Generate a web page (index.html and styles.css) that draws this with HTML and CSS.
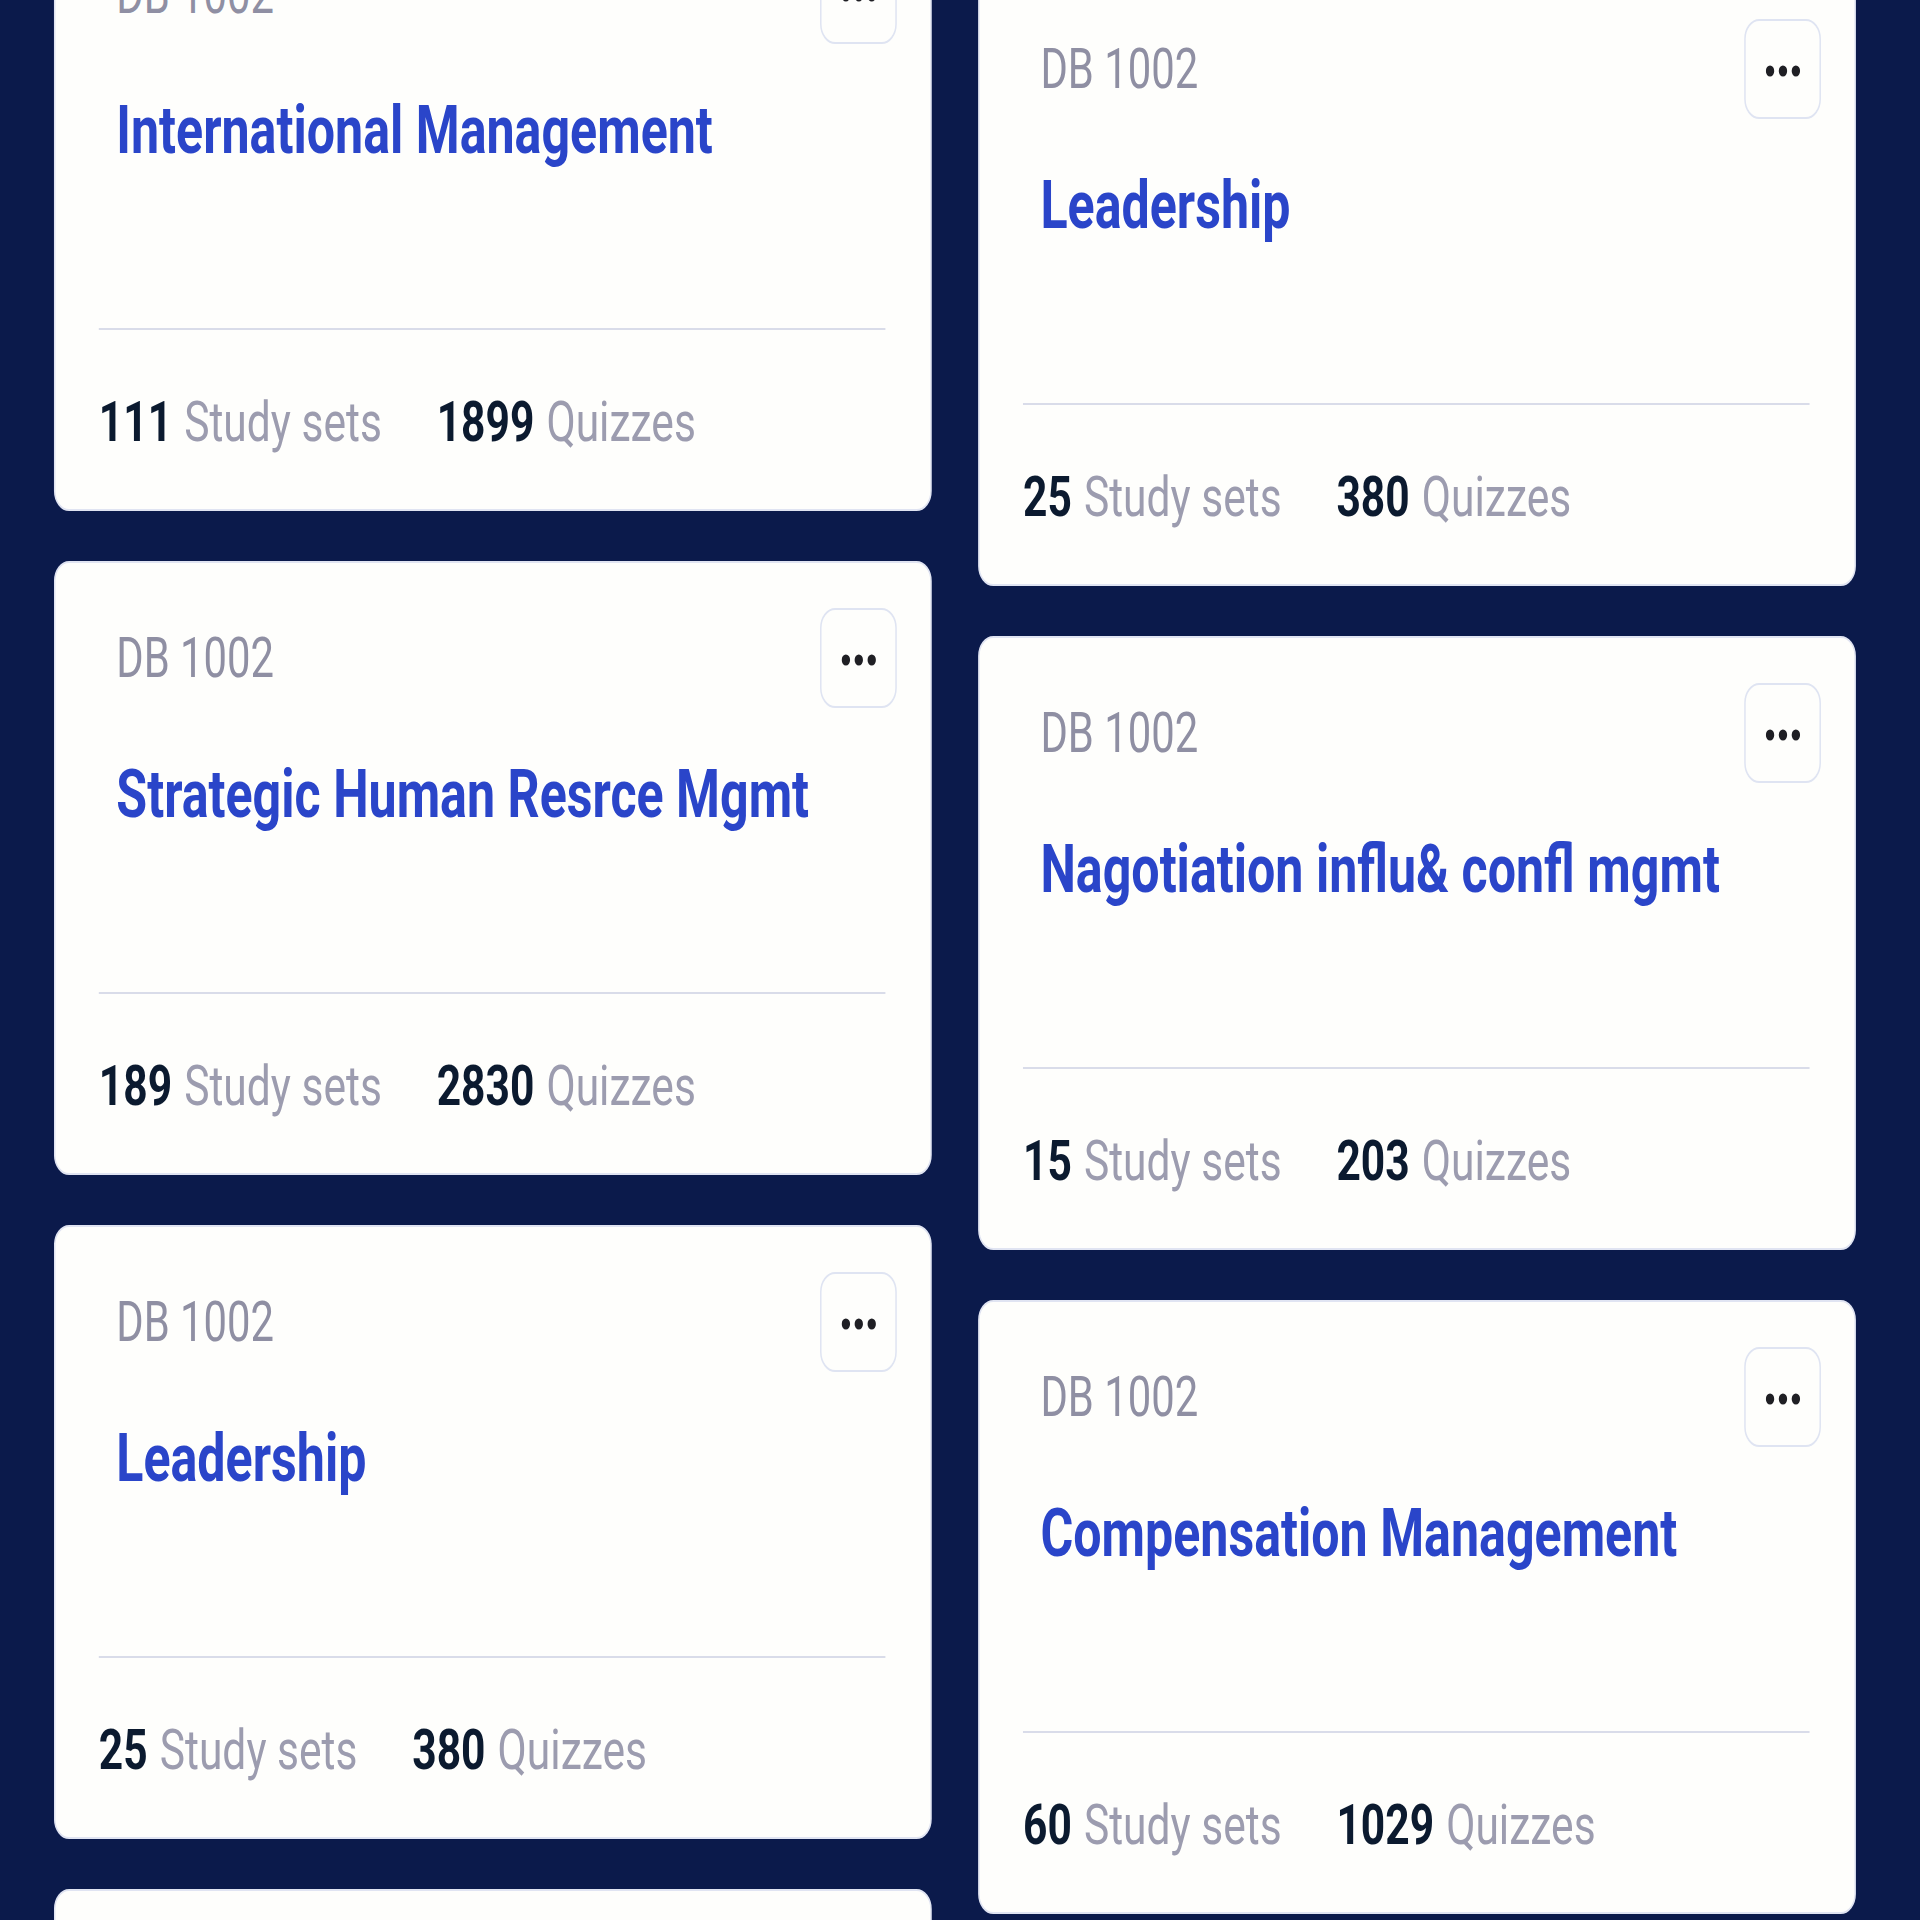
FILE: index.html
```html
<!DOCTYPE html>
<html>
  <head>
    <meta charset="UTF-8" />
    <title>Courses</title>
    <link rel="stylesheet" href="styles.css">
  </head>
  <body>
    <div class="board">
      <div class="col col-left">
        <div class="card">
          <div class="head">
            <span class="code">DB 1002</span>
            <button class="more"><svg width="46" height="14" viewBox="0 0 46 14"><circle cx="6" cy="7" r="5.5"/><circle cx="23" cy="7" r="5.5"/><circle cx="40" cy="7" r="5.5"/></svg></button>
          </div>
          <div class="title">International Management</div>
          <div class="rule"></div>
          <div class="stats"><span><b>111</b> Study sets</span><span><b>1899</b> Quizzes</span></div>
        </div>
        <div class="card">
          <div class="head">
            <span class="code">DB 1002</span>
            <button class="more"><svg width="46" height="14" viewBox="0 0 46 14"><circle cx="6" cy="7" r="5.5"/><circle cx="23" cy="7" r="5.5"/><circle cx="40" cy="7" r="5.5"/></svg></button>
          </div>
          <div class="title">Strategic Human Resrce Mgmt</div>
          <div class="rule"></div>
          <div class="stats"><span><b>189</b> Study sets</span><span><b>2830</b> Quizzes</span></div>
        </div>
        <div class="card">
          <div class="head">
            <span class="code">DB 1002</span>
            <button class="more"><svg width="46" height="14" viewBox="0 0 46 14"><circle cx="6" cy="7" r="5.5"/><circle cx="23" cy="7" r="5.5"/><circle cx="40" cy="7" r="5.5"/></svg></button>
          </div>
          <div class="title">Leadership</div>
          <div class="rule"></div>
          <div class="stats"><span><b>25</b> Study sets</span><span><b>380</b> Quizzes</span></div>
        </div>
        <div class="card">
          <div class="head">
            <span class="code">DB 1002</span>
            <button class="more"><svg width="46" height="14" viewBox="0 0 46 14"><circle cx="6" cy="7" r="5.5"/><circle cx="23" cy="7" r="5.5"/><circle cx="40" cy="7" r="5.5"/></svg></button>
          </div>
          <div class="title">Business Ethics</div>
          <div class="rule"></div>
          <div class="stats"><span><b>40</b> Study sets</span><span><b>512</b> Quizzes</span></div>
        </div>
      </div>
      <div class="col col-right">
        <div class="card">
          <div class="head">
            <span class="code">DB 1002</span>
            <button class="more"><svg width="46" height="14" viewBox="0 0 46 14"><circle cx="6" cy="7" r="5.5"/><circle cx="23" cy="7" r="5.5"/><circle cx="40" cy="7" r="5.5"/></svg></button>
          </div>
          <div class="title">Leadership</div>
          <div class="rule"></div>
          <div class="stats"><span><b>25</b> Study sets</span><span><b>380</b> Quizzes</span></div>
        </div>
        <div class="card">
          <div class="head">
            <span class="code">DB 1002</span>
            <button class="more"><svg width="46" height="14" viewBox="0 0 46 14"><circle cx="6" cy="7" r="5.5"/><circle cx="23" cy="7" r="5.5"/><circle cx="40" cy="7" r="5.5"/></svg></button>
          </div>
          <div class="title">Nagotiation influ&amp; confl mgmt</div>
          <div class="rule"></div>
          <div class="stats"><span><b>15</b> Study sets</span><span><b>203</b> Quizzes</span></div>
        </div>
        <div class="card">
          <div class="head">
            <span class="code">DB 1002</span>
            <button class="more"><svg width="46" height="14" viewBox="0 0 46 14"><circle cx="6" cy="7" r="5.5"/><circle cx="23" cy="7" r="5.5"/><circle cx="40" cy="7" r="5.5"/></svg></button>
          </div>
          <div class="title">Compensation Management</div>
          <div class="rule"></div>
          <div class="stats"><span><b>60</b> Study sets</span><span><b>1029</b> Quizzes</span></div>
        </div>
      </div>
    </div>
  </body>
</html>
```

FILE: styles.css
```css
html, body {
  margin: 0;
  height: 100%;
  overflow: hidden;
  background-color: #0b1a4b;
}
body {
  font-family: Roboto, "Liberation Sans", sans-serif;
}
/* the whole board is drawn squeezed sideways */
.board {
  display: flex;
  gap: 61px;
  width: 2528px;
  padding-left: 71px;
  box-sizing: border-box;
  align-items: flex-start;
  transform: scaleX(0.76);
  transform-origin: 0 0;
}
.col {
  width: 1155px;
  display: flex;
  flex-direction: column;
  gap: 50px;
}
.col-left {
  margin-top: -103px;
}
.col-right {
  margin-top: -28px;
}
.card {
  height: 614px;
  box-sizing: border-box;
  display: flex;
  flex-direction: column;
  background-color: #fefefc;
  border: 2px solid #e0e4f2;
  border-radius: 20px;
  padding-bottom: 59px;
}
.head {
  display: flex;
  justify-content: space-between;
  align-items: flex-start;
  padding: 45px 44px 0 80px;
}
.code {
  margin-top: 23px;
  font-size: 55px;
  line-height: 1;
  color: #8f8fa3;
}
.more {
  width: 101px;
  height: 100px;
  padding: 4px 0 0;
  display: flex;
  align-items: center;
  justify-content: center;
  background-color: #fefefc;
  border: 2px solid #dfe4f2;
  border-radius: 20px;
}
.more svg {
  fill: #1f1f24;
}
.title {
  margin: 54px 0 0 80px;
  font-size: 66px;
  line-height: 1;
  font-weight: 700;
  color: #2a45c9;
}
.rule {
  margin: auto 59px 0 57px;
  height: 2px;
  background-color: #d9dce9;
}
.stats {
  display: flex;
  gap: 72px;
  margin: 64px 0 0 57px;
  font-size: 56px;
  line-height: 1;
  color: #9c9caf;
}
.stats b {
  margin-right: 2px;
  font-weight: 700;
  color: #0b1a2f;
}
```
